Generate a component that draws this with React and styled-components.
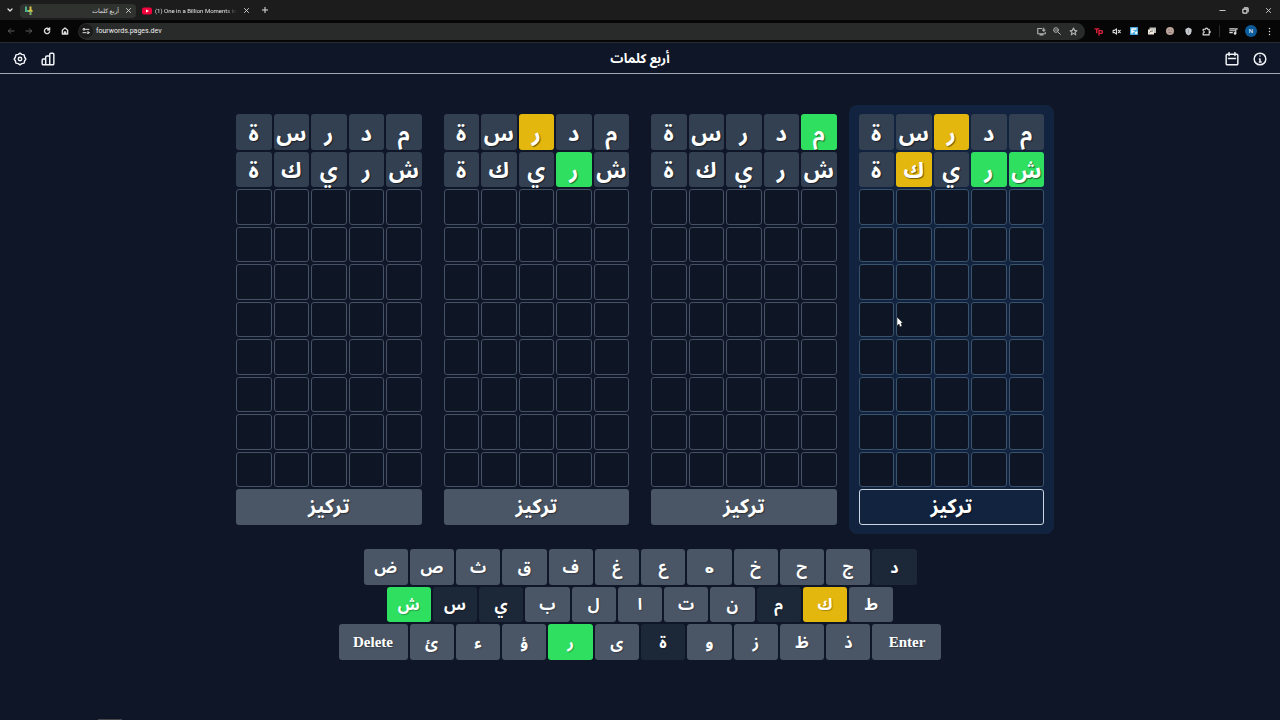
import React from 'react';
import styled, { createGlobalStyle } from 'styled-components';

const WORDS = ['مدرسة', 'شريكة'];
const ROWS = 10;

// g = right spot, y = in the word, . = not in the word
const BOARDS = [
  ['.....', '.....'],
  ['..y..', '.g...'],
  ['g....', '.....'],
  ['..y..', 'gg.y.'],
];

const KEY_ROWS = [
  { width: 553, keys: ['ض', 'ص', 'ث', 'ق', 'ف', 'غ', 'ع', 'ه', 'خ', 'ح', 'ج', 'د'] },
  { width: 507, keys: ['ش', 'س', 'ي', 'ب', 'ل', 'ا', 'ت', 'ن', 'م', 'ك', 'ط'] },
  { width: 603, keys: ['Delete', 'ئ', 'ء', 'ؤ', 'ر', 'ى', 'ة', 'و', 'ز', 'ظ', 'ذ', 'Enter'] },
];

const KEY_STATES = { ش: 'g', ر: 'g', ك: 'y', د: '.', س: '.', ي: '.', م: '.', ة: '.' };

const TILE_COLORS = { g: '#2fdf60', y: '#e4b70e', '.': '#334052' };
const KEY_COLORS = { g: '#2fdf60', y: '#e4b70e', '.': '#1c2738' };

const Icon = ({ size = 10, width = 2, children }) => (
  <svg
    width={size}
    height={size}
    viewBox="0 0 24 24"
    fill="none"
    stroke="currentColor"
    strokeWidth={width}
    strokeLinecap="round"
    strokeLinejoin="round"
    aria-hidden="true"
  >
    {children}
  </svg>
);

const CloseIcon = ({ size = 7, width = 3 }) => (
  <Icon size={size} width={width}><path d="M5 5l14 14M19 5L5 19" /></Icon>
);

const TabStrip = () => (
  <Tabs>
    <TabSearch aria-label="Search tabs"><Icon size={8} width={4}><path d="M6 9l6 6 6-6" /></Icon></TabSearch>
    <Tab $active>
      <svg width="9" height="9" viewBox="0 0 18 18" aria-hidden="true">
        <path d="M4 1v9h7" fill="none" stroke="#4fae8c" strokeWidth="4" />
        <path d="M9 10h8" stroke="#e8c53a" strokeWidth="4" />
        <path d="M13 1v8" stroke="#d9c646" strokeWidth="4" />
        <path d="M13 10v8" stroke="#7fae70" strokeWidth="4" />
      </svg>
      <TabTitle dir="rtl">أربع كلمات</TabTitle>
      <ChromeButton aria-label="Close tab"><CloseIcon /></ChromeButton>
    </Tab>
    <Tab>
      <svg width="10" height="8" viewBox="0 0 20 16" aria-hidden="true">
        <rect y="1" width="20" height="14" rx="4" fill="#f0033c" />
        <path d="M8 5l6 3-6 3z" fill="#fff" />
      </svg>
      <TabTitle $fade>(1) One in a Billion Moments in</TabTitle>
      <ChromeButton aria-label="Close tab"><CloseIcon /></ChromeButton>
    </Tab>
    <NewTab aria-label="New tab"><Icon size={8} width={3}><path d="M12 4v16M4 12h16" /></Icon></NewTab>
    <WindowButtons>
      <ChromeButton aria-label="Minimize"><Icon size={7} width={3}><path d="M3 12h18" /></Icon></ChromeButton>
      <ChromeButton aria-label="Restore">
        <Icon size={7} width={4}><rect x="3" y="7" width="14" height="14" rx="2" /><path d="M8 3h10q3 0 3 3v10" /></Icon>
      </ChromeButton>
      <ChromeButton aria-label="Close"><CloseIcon /></ChromeButton>
    </WindowButtons>
  </Tabs>
);

const Toolbar = () => (
  <Tools>
    <NavButtons>
      <ChromeButton $dim aria-label="Back"><Icon size={8} width={3}><path d="M21 12H4M11 5l-7 7 7 7" /></Icon></ChromeButton>
      <ChromeButton $dim aria-label="Forward"><Icon size={8} width={3}><path d="M3 12h17M13 5l7 7-7 7" /></Icon></ChromeButton>
      <ChromeButton aria-label="Reload">
        <Icon size={8} width={4}><path d="M20 14a8 8 0 1 1-2-8l2 2M20 3v6h-6" /></Icon>
      </ChromeButton>
      <ChromeButton aria-label="Home">
        <Icon size={8} width={4}><path d="M4 10l8-7 8 7v11H4zM10 21v-6h4v6" /></Icon>
      </ChromeButton>
    </NavButtons>
    <AddressBar>
      <SiteInfo aria-label="Site information">
        <Icon size={8} width={3}>
          <circle cx="6" cy="7" r="3" /><path d="M13 7h8M3 17h8" /><circle cx="18" cy="17" r="3" />
        </Icon>
      </SiteInfo>
      <Address aria-label="Address" defaultValue="fourwords.pages.dev" />
      <AddressActions>
        <ChromeButton aria-label="Install">
          <Icon size={9} width={3}><path d="M13 4H2v14h20v-4M8 21h8M18 3v8M15 8l3 3 3-3" /></Icon>
        </ChromeButton>
        <ChromeButton aria-label="Zoom">
          <Icon size={8} width={3}><circle cx="9" cy="9" r="7" /><path d="M14 14l8 8M6 9h6" /></Icon>
        </ChromeButton>
        <ChromeButton aria-label="Bookmark">
          <Icon size={9} width={3}><path d="M12 3l3 6 6 1-5 4 2 7-6-4-6 4 2-7-5-4 6-1z" /></Icon>
        </ChromeButton>
      </AddressActions>
    </AddressBar>
    <Extensions>
      <ChromeButton aria-label="Tp">
        <svg width="9" height="9" viewBox="0 0 20 20" fill="none" stroke="#e0203e" strokeWidth="3" aria-hidden="true">
          <path d="M1 4h11M6 4v10M11 19V8h5q3 0 3 3t-3 3h-5" />
        </svg>
      </ChromeButton>
      <ChromeButton aria-label="Mute">
        <Icon size={9} width={3}><path d="M3 9v6h4l5 4V5L7 9z" /><path d="M17 9l5 6M22 9l-5 6" /></Icon>
      </ChromeButton>
      <ChromeButton aria-label="Notes">
        <svg width="8" height="8" viewBox="0 0 16 16" aria-hidden="true">
          <rect width="16" height="16" rx="1" fill="#4aa9dc" />
          <path d="M3 4h10M4 4v9M4 9h5M10 12h3V9" stroke="#fff" strokeWidth="3" fill="none" />
        </svg>
      </ChromeButton>
      <ChromeButton aria-label="Windows">
        <svg width="8" height="8" viewBox="0 0 16 16" aria-hidden="true">
          <rect x="3" y="1" width="13" height="11" fill="#bdbdba" />
          <rect y="5" width="12" height="10" fill="#eee9dc" />
          <path d="M3 11l3-3h4" stroke="#66645e" strokeWidth="2" fill="none" />
        </svg>
      </ChromeButton>
      <ChromeButton aria-label="Cookies">
        <svg width="8" height="8" viewBox="0 0 16 16" aria-hidden="true">
          <circle cx="8" cy="8" r="8" fill="#b9a39a" />
          <path d="M4 6h3M10 6h2M5 11h6" stroke="#8d7a73" strokeWidth="2" />
        </svg>
      </ChromeButton>
      <ChromeButton aria-label="Shield">
        <svg width="7" height="9" viewBox="0 0 16 18" aria-hidden="true">
          <path d="M8 0l7 3v6q0 6-7 9-7-3-7-9V3z" fill="#c9cbd0" />
          <path d="M8 4v9" stroke="#a3a7ae" strokeWidth="3" />
        </svg>
      </ChromeButton>
      <ChromeButton aria-label="Extensions">
        <Icon size={9} width={3}><path d="M3 6h6q0-3 3-3t3 3h4v5q3 0 3 2t-3 2v6H3v-5q3-1 3-3t-3-3z" /></Icon>
      </ChromeButton>
    </Extensions>
    <ProfileTools>
      <ChromeButton aria-label="Media">
        <Icon size={9} width={3}><path d="M2 5h13M2 10h13M2 15h7M18 17V5h4" /><circle cx="16" cy="17" r="2" /></Icon>
      </ChromeButton>
      <Profile>N</Profile>
      <ChromeButton aria-label="Menu">
        <Icon size={9} width={4}><path d="M12 4h0M12 12h0M12 20h0" /></Icon>
      </ChromeButton>
    </ProfileTools>
  </Tools>
);

const Board = ({ states, focused }) => (
  <BoardPanel $focused={focused}>
    {Array.from({ length: ROWS }, (_, row) => (
      <TileRow key={row} dir="rtl">
        {Array.from({ length: 5 }, (_, col) => {
          const letter = WORDS[row] && WORDS[row][col];
          return letter
            ? <Tile key={col} $state={states[row][col]}>{letter}</Tile>
            : <EmptyTile key={col} $focused={focused} />;
        })}
      </TileRow>
    ))}
    <FocusButton $focused={focused} aria-pressed={focused}>تركيز</FocusButton>
  </BoardPanel>
);

export default function App() {
  const [focus, setFocus] = React.useState(3);

  return (
    <Page>
      <GlobalStyle />
      <TabStrip />
      <Toolbar />
      <Header>
        <HeaderGroup>
          <HeaderButton aria-label="Settings">
            <Icon size={14} width={2.5}>
              <path d="M12 2l3 2 4 1 1 4 2 3-2 3-1 4-4 1-3 2-3-2-4-1-1-4-2-3 2-3 1-4 4-1z" />
              <circle cx="12" cy="12" r="3" />
            </Icon>
          </HeaderButton>
          <HeaderButton aria-label="Statistics">
            <Icon size={14} width={2.5}>
              <path d="M2 14q0-2 2-2h4v10H4q-2 0-2-2zM8 22V9q0-2 2-2h5v15zM15 22V4q0-2 2-2h3q2 0 2 2v16q0 2-2 2z" />
            </Icon>
          </HeaderButton>
        </HeaderGroup>
        <Title dir="rtl">أربع كلمات</Title>
        <HeaderGroup $end>
          <HeaderButton aria-label="Calendar">
            <Icon size={14} width={2.5}>
              <rect x="2" y="4" width="20" height="18" rx="2" /><path d="M7 1v5M17 1v5M6 11h12" />
            </Icon>
          </HeaderButton>
          <HeaderButton aria-label="Information">
            <Icon size={14} width={2.5}><circle cx="12" cy="12" r="10" /><path d="M11 12h1v5M11 17h3M12 7h0" /></Icon>
          </HeaderButton>
        </HeaderGroup>
      </Header>
      <Main>
        <Boards>
          {BOARDS.map((states, i) => (
            <div key={i} onClick={() => setFocus(i)}>
              <Board states={states} focused={focus === i} />
            </div>
          ))}
        </Boards>
        <Keyboard>
          {KEY_ROWS.map(({ width, keys }) => (
            <KeyRow key={width} $width={width}>
              {keys.map((k) => {
                if (k.length > 1) return <WideKey key={k}>{k}</WideKey>;
                return <Key key={k} $state={KEY_STATES[k]} $round={k === 'ه'}>{k}</Key>;
              })}
            </KeyRow>
          ))}
        </Keyboard>
      </Main>
      <BottomHandle />
      <Pointer width="8" height="12" viewBox="0 0 8 12" aria-hidden="true">
        <path d="M1 1v9l2-2 1 3 2-1-1-3h2z" fill="#fff" stroke="#111" strokeWidth=".5" />
      </Pointer>
    </Page>
  );
}

const GlobalStyle = createGlobalStyle`
  * {
    box-sizing: border-box;
  }

  body {
    margin: 0;
    background: #0f1627;
    color: #ffffff;
    font-family: "Noto Sans Arabic", "DejaVu Sans", sans-serif;
  }

  button {
    border: 0;
    padding: 0;
    color: inherit;
    font-family: inherit;
    cursor: pointer;
  }

  svg {
    display: block;
    flex: none;
  }
`;

const Page = styled.div`
  position: relative;
  display: flex;
  flex-direction: column;
  min-height: 100vh;
`;

const Tabs = styled.div`
  display: flex;
  align-items: center;
  height: 20px;
  padding: 0 6px 0 4px;
  background: #1c1c1c;
  font-family: Roboto, "DejaVu Sans", sans-serif;
`;

const ChromeButton = styled.button`
  display: flex;
  align-items: center;
  justify-content: center;
  width: 12px;
  height: 12px;
  background: none;
  color: ${({ $dim }) => ($dim ? '#5c5c5c' : '#dedede')};
`;

const TabSearch = styled(ChromeButton)`
  margin-right: 4px;
`;

const NewTab = styled(ChromeButton)`
  margin-left: 5px;
`;

const Tab = styled.div`
  display: flex;
  align-items: center;
  gap: 3px;
  width: ${({ $active }) => ($active ? 116 : 118)}px;
  height: 14px;
  margin-top: 1px;
  padding: 0 2px 0 ${({ $active }) => ($active ? 4 : 6)}px;
  border-radius: 4px;
  background: ${({ $active }) => ($active ? '#303230' : 'none')};
`;

const TabTitle = styled.span`
  flex: 1;
  overflow: hidden;
  white-space: nowrap;
  font-size: 6px;
  line-height: 12px;
  color: #e3e3e3;
  ${({ $fade }) => $fade && 'mask-image: linear-gradient(to right, #000 85%, transparent);'}
`;

const WindowButtons = styled.div`
  display: flex;
  gap: 11px;
  margin-left: auto;
`;

const Tools = styled.div`
  display: flex;
  align-items: center;
  height: 23px;
  padding: 0 5px;
  background: #060606;
  border-bottom: 1px solid #292c31;
  font-family: Roboto, sans-serif;
`;

const NavButtons = styled.div`
  display: flex;
  gap: 6px;
  margin-right: 7px;
`;

const AddressBar = styled.div`
  display: flex;
  align-items: center;
  flex: 1;
  height: 17px;
  padding: 0 6px 0 1px;
  border-radius: 9px;
  background: #292a2a;
`;

const SiteInfo = styled(ChromeButton)`
  width: 14px;
  height: 14px;
  border-radius: 50%;
  background: #1b1b1b;
`;

const Address = styled.input`
  flex: 1;
  min-width: 0;
  padding: 0 3px;
  border: 0;
  outline: 0;
  background: none;
  color: #f0f0f0;
  font-family: inherit;
  font-size: 7px;
`;

const AddressActions = styled.div`
  display: flex;
  gap: 4px;
  opacity: 0.75;
`;

const Extensions = styled.div`
  display: flex;
  gap: 6px;
  margin-left: 7px;
  padding-right: 7px;
`;

const ProfileTools = styled.div`
  display: flex;
  align-items: center;
  gap: 6px;
  padding-left: 7px;
  border-left: 1px solid #2a2a2a;
`;

const Profile = styled.button`
  width: 12px;
  height: 12px;
  border-radius: 50%;
  background: #0c5c9c;
  font-size: 6px;
  line-height: 12px;
`;

const Header = styled.header`
  display: flex;
  align-items: center;
  height: 31px;
  padding: 1px 13px 0;
  border-bottom: 1px solid #a4aab5;
`;

const HeaderGroup = styled.div`
  display: flex;
  flex: 1;
  gap: 14px;
  justify-content: ${({ $end }) => ($end ? 'flex-end' : 'flex-start')};
`;

const HeaderButton = styled.button`
  background: none;
  color: #f1f3f7;
`;

const Title = styled.h1`
  margin: 0;
  font-size: 13px;
  line-height: 28px;
`;

const Main = styled.main`
  display: flex;
  flex-direction: column;
  align-items: center;
  gap: 15px;
  padding: 31px 16px;
`;

const Boards = styled.div`
  display: grid;
  grid-template-columns: repeat(4, 1fr);
  gap: 2px;
  width: 100%;
  max-width: 828px;
`;

const BoardPanel = styled.section`
  display: grid;
  grid-template-rows: repeat(11, 1fr);
  gap: 2px;
  height: 429px;
  padding: 9px 10px;
  border-radius: 8px;
  background: ${({ $focused }) => ($focused ? '#11233f' : 'none')};
`;

const TileRow = styled.div`
  display: grid;
  grid-template-columns: repeat(5, 1fr);
  gap: 2px;
  min-height: 0;
`;

const Tile = styled.div`
  display: flex;
  align-items: center;
  justify-content: center;
  min-width: 0;
  min-height: 0;
  padding-top: 4px;
  border-radius: 3px;
  background: ${({ $state }) => TILE_COLORS[$state]};
  font-size: 22px;
  font-weight: 700;
  line-height: 32px;
  text-shadow: 1px 1px 1px #00000088;
`;

const EmptyTile = styled.div`
  border: 1px solid ${({ $focused }) => ($focused ? '#3a536c' : '#455164')};
  border-radius: 3px;
  background: #0e1525;
`;

const FocusButton = styled.button`
  min-height: 0;
  border-radius: 3px;
  background: #4a5565;
  font-size: 20px;
  font-weight: 700;
  line-height: 32px;
  text-shadow: 1px 1px 1px #00000066;
  ${({ $focused }) => $focused && `
    background: #11233f;
    border: 1px solid #cbd5e1;
  `}
`;

const Keyboard = styled.div`
  display: grid;
  grid-template-rows: repeat(3, 1fr);
  justify-items: center;
  gap: 2px;
  width: 100%;
  height: 111px;
`;

const KeyRow = styled.div`
  display: flex;
  gap: 2px;
  width: 100%;
  max-width: ${({ $width }) => $width}px;
  min-height: 0;
`;

const Key = styled.button`
  flex: 1;
  min-width: 0;
  padding-top: 2px;
  border-radius: 3px;
  background: ${({ $state }) => KEY_COLORS[$state] || '#4a5565'};
  font-size: 16px;
  font-weight: 700;
  line-height: 24px;
  text-shadow: 1px 1px 1px #00000044;
  ${({ $round }) => $round && 'font-family: "DejaVu Sans", sans-serif;'}
`;

const WideKey = styled(Key)`
  flex: 0 0 69px;
  padding-top: 0;
  font-family: "Liberation Serif", serif;
  font-size: 15px;
`;

const BottomHandle = styled.div`
  width: 24px;
  height: 1px;
  margin: auto 0 0 98px;
  background: #46484d;
`;

const Pointer = styled.svg`
  position: absolute;
  top: 316px;
  left: 896px;
  pointer-events: none;
`;
